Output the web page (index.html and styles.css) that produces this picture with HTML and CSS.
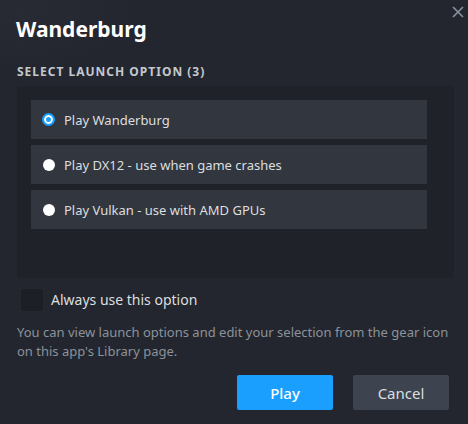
FILE: index.html
```html
<!DOCTYPE html>
<html lang="en">
<head>
<meta charset="utf-8">
<title>Wanderburg</title>
<link rel="stylesheet" href="styles.css">
</head>
<body>
<div class="dialog">
  <button class="close" aria-label="Close">
    <svg width="12" height="12" viewBox="0 0 12 12"><path d="M1 1 L11 11 M11 1 L1 11" stroke="#8a93a0" stroke-width="1.6" fill="none"/></svg>
  </button>
  <h1 class="title">Wanderburg</h1>
  <div class="section-label">SELECT LAUNCH OPTION (3)</div>
  <div class="options">
    <div class="option">
      <span class="radio checked"></span>
      <span class="option-text">Play Wanderburg</span>
    </div>
    <div class="option">
      <span class="radio"></span>
      <span class="option-text">Play DX12 - use when game crashes</span>
    </div>
    <div class="option">
      <span class="radio"></span>
      <span class="option-text">Play Vulkan - use with AMD GPUs</span>
    </div>
  </div>
  <div class="always">
    <span class="checkbox"></span>
    <span class="always-text">Always use this option</span>
  </div>
  <p class="desc">You can view launch options and edit your selection from the gear icon on this app's Library page.</p>
  <div class="buttons">
    <button class="btn btn-play">Play</button>
    <button class="btn btn-cancel">Cancel</button>
  </div>
</div>
</body>
</html>
```
FILE: styles.css
```css
* { box-sizing: border-box; }
html, body {
  margin: 0;
  padding: 0;
  width: 468px;
  height: 424px;
  overflow: hidden;
}
body {
  background: #23262e;
  font-family: "Noto Sans", "Open Sans", sans-serif;
  color: #dcdedf;
}
.dialog {
  position: relative;
  height: 424px;
  padding: 17px 19px 0 17px;
  background: radial-gradient(ellipse 120px 60px at 20px 10px, rgba(255,255,255,0.025), rgba(255,255,255,0) 100%), #23262e;
}
.close {
  position: absolute;
  top: 6px;
  right: 4px;
  width: 12px;
  height: 12px;
  padding: 0;
  border: 0;
  background: none;
  display: flex;
}
.title {
  margin: 0 0 0 -1px;
  font-size: 21px;
  line-height: 24px;
  font-weight: 700;
  color: #ffffff;
}
.section-label {
  margin-top: 23px;
  font-size: 12px;
  line-height: 16px;
  font-weight: 700;
  letter-spacing: 1px;
  color: #c3c8ce;
}
.options {
  margin-top: 6px;
  margin-right: -5px;
  height: 192px;
  padding: 14px 27px 0 14px;
  background: #1f2229;
  border-radius: 3px;
  display: flex;
  flex-direction: column;
  gap: 6px;
}
.option {
  height: 39px;
  background: #32363f;
  display: flex;
  align-items: center;
  padding-left: 12px;
  gap: 9px;
}
.radio {
  width: 12px;
  height: 12px;
  border-radius: 50%;
  background: #ffffff;
  flex: none;
}
.radio.checked {
  width: 13px;
  height: 13px;
  margin-left: -1px;
  background: #1a9fff;
  border: 2px solid #1a9fff;
  box-shadow: inset 0 0 0 2px #ffffff;
}
.option-text {
  font-size: 13px;
  line-height: 18px;
  color: #dcdedf;
}
.always {
  margin-top: 11px;
  display: flex;
  align-items: center;
  gap: 8px;
  padding-left: 4px;
}
.checkbox {
  width: 22px;
  height: 22px;
  background: #1c1f25;
  border-radius: 2px;
  flex: none;
}
.always-text {
  font-size: 14px;
  line-height: 20px;
  color: #dcdedf;
}
.desc {
  margin: 12px 0 0 0;
  font-size: 13px;
  line-height: 19px;
  color: #8b929a;
}
.buttons {
  margin-top: 14px;
  display: flex;
  justify-content: flex-end;
  gap: 20px;
}
.btn {
  width: 96px;
  height: 35px;
  border: 0;
  border-radius: 2px;
  font-family: "Noto Sans", "Open Sans", sans-serif;
  font-size: 15px;
  padding: 0;
}
.btn-play {
  background: #1a9fff;
  color: #ffffff;
  font-weight: 500;
}
.btn-cancel {
  background: #3d4450;
  color: #dcdedf;
}
```
